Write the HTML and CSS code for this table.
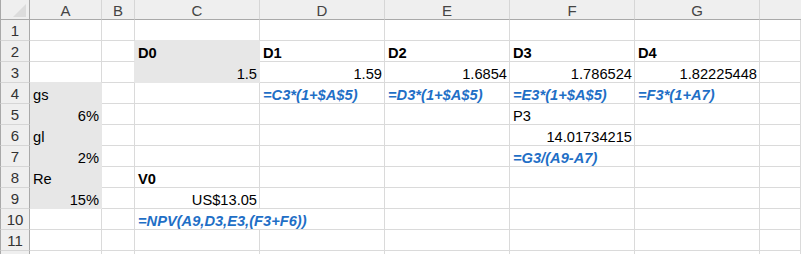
FILE: index.html
```html
<!DOCTYPE html>
<html>
<head>
<meta charset="utf-8">
<link rel="stylesheet" href="styles.css">
</head>
<body>
<div class="sheet">
  <div class="ch corner"><svg class="tri" width="13" height="13" viewBox="0 0 13 13"><polygon points="13,0 13,13 0,13" fill="#dcdcdc"/></svg></div>
  <div class="ch">A</div><div class="ch">B</div><div class="ch">C</div><div class="ch">D</div><div class="ch">E</div><div class="ch">F</div><div class="ch">G</div><div class="ch last"></div>

  <div class="rh">1</div><div class="c"></div><div class="c"></div><div class="c fb"></div><div class="c"></div><div class="c"></div><div class="c"></div><div class="c"></div><div class="c"></div>

  <div class="rh">2</div><div class="c"></div><div class="c fr"></div><div class="c fill b">D0</div><div class="c b">D1</div><div class="c b">D2</div><div class="c b">D3</div><div class="c b">D4</div><div class="c"></div>

  <div class="rh">3</div><div class="c fb"></div><div class="c fr"></div><div class="c fill r">1.5</div><div class="c r">1.59</div><div class="c r">1.6854</div><div class="c r">1.786524</div><div class="c r">1.82225448</div><div class="c"></div>

  <div class="rh">4</div><div class="c fill">gs</div><div class="c"></div><div class="c"></div><div class="c f">=C3*(1+$A$5)</div><div class="c f">=D3*(1+$A$5)</div><div class="c f">=E3*(1+$A$5)</div><div class="c f">=F3*(1+A7)</div><div class="c"></div>

  <div class="rh">5</div><div class="c fill r">6%</div><div class="c"></div><div class="c"></div><div class="c"></div><div class="c"></div><div class="c">P3</div><div class="c"></div><div class="c"></div>

  <div class="rh">6</div><div class="c fill">gl</div><div class="c"></div><div class="c"></div><div class="c"></div><div class="c"></div><div class="c r">14.01734215</div><div class="c"></div><div class="c"></div>

  <div class="rh">7</div><div class="c fill r">2%</div><div class="c"></div><div class="c"></div><div class="c"></div><div class="c"></div><div class="c f">=G3/(A9-A7)</div><div class="c"></div><div class="c"></div>

  <div class="rh">8</div><div class="c fill">Re</div><div class="c"></div><div class="c b">V0</div><div class="c"></div><div class="c"></div><div class="c"></div><div class="c"></div><div class="c"></div>

  <div class="rh">9</div><div class="c fill r">15%</div><div class="c"></div><div class="c r">US$13.05</div><div class="c"></div><div class="c"></div><div class="c"></div><div class="c"></div><div class="c"></div>

  <div class="rh">10</div><div class="c"></div><div class="c"></div><div class="c f span2">=NPV(A9,D3,E3,(F3+F6))</div><div class="c"></div><div class="c"></div><div class="c"></div><div class="c"></div>

  <div class="rh">11</div><div class="c"></div><div class="c"></div><div class="c"></div><div class="c"></div><div class="c"></div><div class="c"></div><div class="c"></div><div class="c"></div>

  <div class="rh"></div><div class="c"></div><div class="c"></div><div class="c"></div><div class="c"></div><div class="c"></div><div class="c"></div><div class="c"></div><div class="c"></div>
</div>
</body>
</html>
```

FILE: styles.css
```css
html, body {
  margin: 0;
  padding: 0;
  background: #ffffff;
  overflow: hidden;
}

.sheet {
  display: grid;
  grid-template-columns: 30px 72px 33px 125px 125px 125px 125px 125px 1fr;
  grid-template-rows: 20px repeat(12, 21px);
  width: 801px;
  height: 254px;
  overflow: hidden;
  font-family: "Liberation Sans", Arial, sans-serif;
  font-size: 14.67px;
  color: #000;
}

.ch, .rh, .c {
  box-sizing: border-box;
  display: flex;
  line-height: 16px;
  white-space: nowrap;
}

.ch {
  background: #efefef;
  border-right: 1px solid #d6d6d6;
  border-bottom: 1px solid #a9a9a9;
  justify-content: center;
  align-items: flex-end;
  color: #444;
  font-size: 15px;
}

.ch.last {
  border-right: none;
}

.corner {
  justify-content: flex-end;
  align-items: flex-end;
  padding: 0 3px 2px 0;
  border-left: 1px solid #a9a9a9;
  border-right: 1px solid #a9a9a9;
}

.tri {
  display: block;
}

.rh {
  background: #efefef;
  border-left: 1px solid #a9a9a9;
  border-right: 1px solid #a9a9a9;
  border-bottom: 1px solid #d6d6d6;
  justify-content: center;
  align-items: flex-end;
  padding-bottom: 1px;
  color: #333;
  font-size: 15px;
}

.c {
  border-right: 1px solid #dadada;
  border-bottom: 1px solid #dadada;
  align-items: flex-end;
  padding: 0 2px 0 3px;
}

.fill {
  background: #e7e7e7;
  border-right-color: #e7e7e7;
  border-bottom-color: #e7e7e7;
}

.fb {
  border-bottom-color: #e7e7e7;
}

.fr {
  border-right-color: #e7e7e7;
}

.r {
  justify-content: flex-end;
}

.b {
  font-weight: bold;
}

.f {
  color: #1f6fc6;
  font-weight: bold;
  font-style: italic;
}

.span2 {
  grid-column: span 2;
}
```
